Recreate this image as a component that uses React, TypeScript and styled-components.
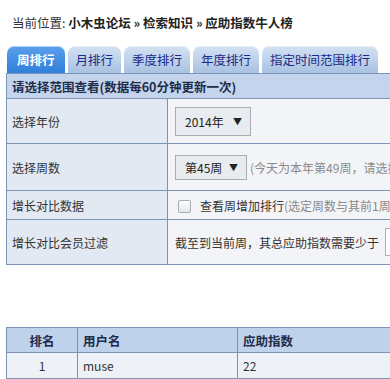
import React from 'react';
import styled, { createGlobalStyle } from 'styled-components';

const Global = createGlobalStyle`
  body {
    margin: 0;
    background: #ffffff;
    overflow: hidden;
    font-family: "Noto Sans CJK SC", "Liberation Sans", sans-serif;
    font-size: 12px;
    color: #333333;
  }
`;

const Page = styled.div`
  padding: 12px 0 0 6px;
  width: 640px;
`;

const Crumbs = styled.div`
  padding-left: 6px;
  height: 22px;
  line-height: 22px;
  font-size: 12.5px;
  color: #333;
  b {
    color: #222;
  }
`;

const Tabs = styled.div`
  display: flex;
  gap: 3px;
  margin-top: 12px;
  padding-left: 1px;
`;

const Tab = styled.div<{ $active?: boolean }>`
  height: 27px;
  line-height: 28px;
  font-size: 12.5px;
  padding: 0 ${p => (p.$active ? 10 : 8)}px;
  border-radius: 7px 7px 0 0;
  color: ${p => (p.$active ? '#ffffff' : '#1c2a86')};
  font-weight: ${p => (p.$active ? 'bold' : 'normal')};
  background: ${p =>
    p.$active
      ? 'linear-gradient(#5aa0ec, #2f7fd9)'
      : 'linear-gradient(#d3e2f3, #a9c2e1)'};
  box-shadow: inset 0 1px 0 rgba(255, 255, 255, 0.5);
`;

const Panel = styled.table`
  width: 100%;
  border-collapse: collapse;
  border: 1px solid #7e94b6;
  td, th {
    border: 1px solid #7e94b6;
    padding: 0 5px;
    text-align: left;
  }
`;

const PanelHead = styled.th`
  height: 24px;
  background: #c3d4ec;
  color: #222c4a;
  font-weight: bold;
  font-size: 12.5px;
`;

const Label = styled.td<{ $h: number }>`
  width: 150px;
  height: ${p => p.$h}px;
  background: #e2e9f3;
`;

const Field = styled.td`
  background: #f3f4f7;
  white-space: nowrap;
  padding-left: 7px !important;
`;

const Select = styled.div<{ $w: number; $h: number }>`
  display: inline-flex;
  align-items: center;
  justify-content: space-between;
  vertical-align: middle;
  box-sizing: border-box;
  width: ${p => p.$w}px;
  height: ${p => p.$h}px;
  padding: 0 8px 0 9px;
  border: 1px solid #a8adb4;
  background: #e8ebef;
  color: #222;
  span.arrow {
    font-size: 9px;
  }
`;

const Hint = styled.span`
  color: #8a8a8a;
  margin-left: 3px;
  vertical-align: middle;
`;

const Text = styled.span`
  vertical-align: middle;
`;

const Check = styled.span`
  display: inline-block;
  vertical-align: middle;
  width: 11px;
  height: 11px;
  margin: 0 9px 0 3px;
  border: 1px solid #a9adb3;
  border-radius: 2px;
  background: linear-gradient(#ffffff, #e4e6ea);
`;

const InputBox = styled.span`
  display: inline-block;
  vertical-align: middle;
  width: 60px;
  height: 26px;
  margin-left: 6px;
  border: 1px solid #a8adb4;
  background: #fff;
`;

const Results = styled.table`
  margin-top: 62px;
  width: 100%;
  table-layout: fixed;
  border-collapse: collapse;
  border: 1px solid #7e94b6;
  th, td {
    border: 1px solid #7e94b6;
    padding: 0 5px;
    text-align: left;
  }
  th {
    height: 24px;
    background: #bfd2ec;
    color: #222c4a;
    font-weight: bold;
    font-size: 12.5px;
  }
  td {
    height: 25px;
    background: #eef1f6;
  }
`;

const Col = styled.col<{ $w?: number }>`
  width: ${p => (p.$w ? `${p.$w}px` : 'auto')};
`;

const Rank = styled.th`
  text-align: center !important;
`;

const RankCell = styled.td`
  text-align: center !important;
`;

export default function App() {
  return (
    <Page>
      <Global />
      <Crumbs>
        当前位置: <b>小木虫论坛 » 检索知识 » 应助指数牛人榜</b>
      </Crumbs>
      <Tabs>
        <Tab $active>周排行</Tab>
        <Tab>月排行</Tab>
        <Tab>季度排行</Tab>
        <Tab>年度排行</Tab>
        <Tab>指定时间范围排行</Tab>
      </Tabs>
      <Panel>
        <tbody>
          <tr>
            <PanelHead colSpan={2}>请选择范围查看(数据每60分钟更新一次)</PanelHead>
          </tr>
          <tr>
            <Label $h={44}>选择年份</Label>
            <Field>
              <Select $w={76} $h={29}>
                2014年<span className="arrow">▼</span>
              </Select>
            </Field>
          </tr>
          <tr>
            <Label $h={46}>选择周数</Label>
            <Field>
              <Select $w={72} $h={25}>
                第45周<span className="arrow">▼</span>
              </Select>
              <Hint>(今天为本年第49周，请选择要查看的周数)</Hint>
            </Field>
          </tr>
          <tr>
            <Label $h={28}>增长对比数据</Label>
            <Field>
              <Check />
              <Text>查看周增加排行</Text>
              <Hint style={{ marginLeft: 0 }}>(选定周数与其前1周的对比)</Hint>
            </Field>
          </tr>
          <tr>
            <Label $h={44}>增长对比会员过滤</Label>
            <Field>
              <Text>截至到当前周，其总应助指数需要少于</Text>
              <InputBox />
            </Field>
          </tr>
        </tbody>
      </Panel>
      <Results>
        <colgroup>
          <Col $w={71} />
          <Col $w={160} />
          <Col />
        </colgroup>
        <thead>
          <tr>
            <Rank>排名</Rank>
            <th>用户名</th>
            <th>应助指数</th>
          </tr>
        </thead>
        <tbody>
          <tr>
            <RankCell>1</RankCell>
            <td>muse</td>
            <td>22</td>
          </tr>
        </tbody>
      </Results>
    </Page>
  );
}
